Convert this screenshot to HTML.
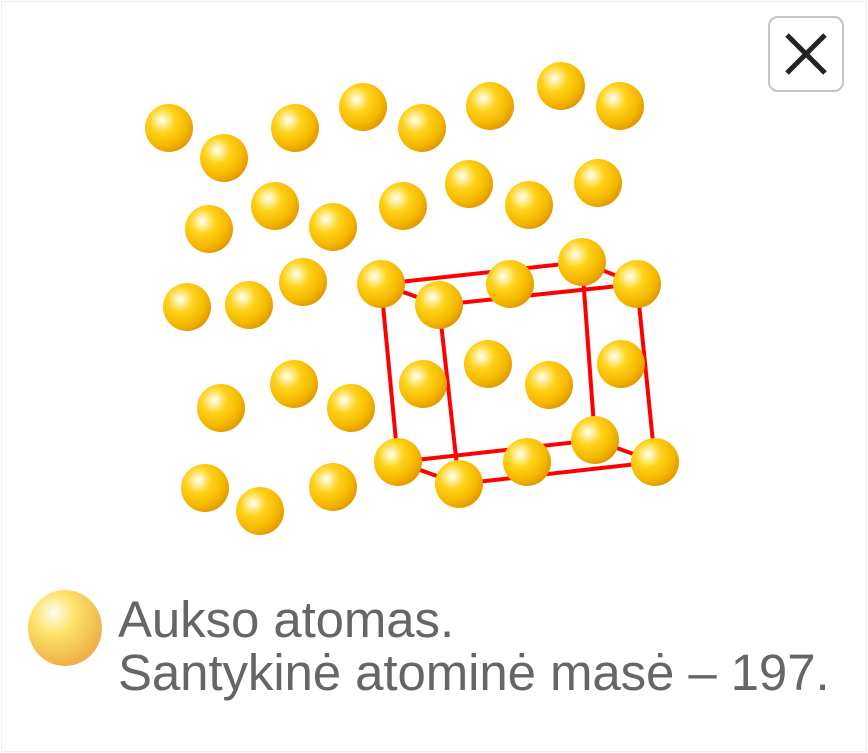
<!DOCTYPE html>
<html><head><style>
body{margin:0;width:868px;height:753px;background:#fff;overflow:hidden;position:relative;font-family:"Liberation Sans",Arial,sans-serif}
.frame{position:absolute;left:1px;top:1px;width:864px;height:749px;border:1px solid #eee}
.btn{position:absolute;left:768px;top:16px;width:72px;height:72px;border:2px solid #c4c4c4;border-radius:10px;background:#fff}
.txt{position:absolute;left:118px;top:593px;font-size:51px;line-height:53px;color:#666;letter-spacing:-0.1px}
</style></head><body>
<div class="frame"></div>
<svg width="868" height="753" style="position:absolute;left:0;top:0">
<defs>
<radialGradient id="g" cx="0.36" cy="0.34" r="0.68">
<stop offset="0" stop-color="#ffffff"/><stop offset="0.12" stop-color="#fff3b0"/><stop offset="0.4" stop-color="#ffd21a"/><stop offset="0.78" stop-color="#f5b800"/><stop offset="1" stop-color="#e39c00"/>
</radialGradient>
<radialGradient id="g2" cx="0.35" cy="0.3" r="0.7">
<stop offset="0" stop-color="#fffdf0"/><stop offset="0.4" stop-color="#fde36a"/><stop offset="1" stop-color="#eeb14a"/>
</radialGradient>
</defs>
<g stroke="#f00" stroke-width="4" fill="none">
<path d="M381 284L439 305L637 284L582 262L381 284M381 284L398 462M439 305L459 484M582 262L595 440M637 284L655 462M398 462L595 440L655 462L459 484Z"/>
</g>
<g fill="url(#g)">
<circle cx="169" cy="128" r="24"/><circle cx="224" cy="158" r="24"/><circle cx="295" cy="128" r="24"/><circle cx="363" cy="107" r="24"/><circle cx="422" cy="128" r="24"/><circle cx="490" cy="106" r="24"/><circle cx="561" cy="86" r="24"/><circle cx="620" cy="106" r="24"/>
<circle cx="209" cy="229" r="24"/><circle cx="275" cy="206" r="24"/><circle cx="333" cy="227" r="24"/><circle cx="403" cy="206" r="24"/><circle cx="469" cy="184" r="24"/><circle cx="529" cy="205" r="24"/><circle cx="598" cy="183" r="24"/>
<circle cx="187" cy="307" r="24"/><circle cx="249" cy="305" r="24"/><circle cx="303" cy="282" r="24"/><circle cx="381" cy="284" r="24"/><circle cx="439" cy="305" r="24"/><circle cx="510" cy="284" r="24"/><circle cx="582" cy="262" r="24"/><circle cx="637" cy="284" r="24"/>
<circle cx="221" cy="408" r="24"/><circle cx="294" cy="384" r="24"/><circle cx="351" cy="408" r="24"/><circle cx="423" cy="384" r="24"/><circle cx="488" cy="364" r="24"/><circle cx="549" cy="385" r="24"/><circle cx="621" cy="364" r="24"/>
<circle cx="205" cy="488" r="24"/><circle cx="260" cy="511" r="24"/><circle cx="333" cy="487" r="24"/><circle cx="398" cy="462" r="24"/><circle cx="459" cy="484" r="24"/><circle cx="527" cy="462" r="24"/><circle cx="595" cy="440" r="24"/><circle cx="655" cy="462" r="24"/>
</g>
<ellipse cx="65" cy="628" rx="37" ry="38" fill="url(#g2)"/>
</svg>
<div class="btn"><svg width="72" height="72"><path d="M17 17L55 55M55 17L17 55" stroke="#222" stroke-width="5"/></svg></div>
<div class="txt">Aukso atomas.<br>Santykinė atominė masė – 197.</div>
</body></html>
